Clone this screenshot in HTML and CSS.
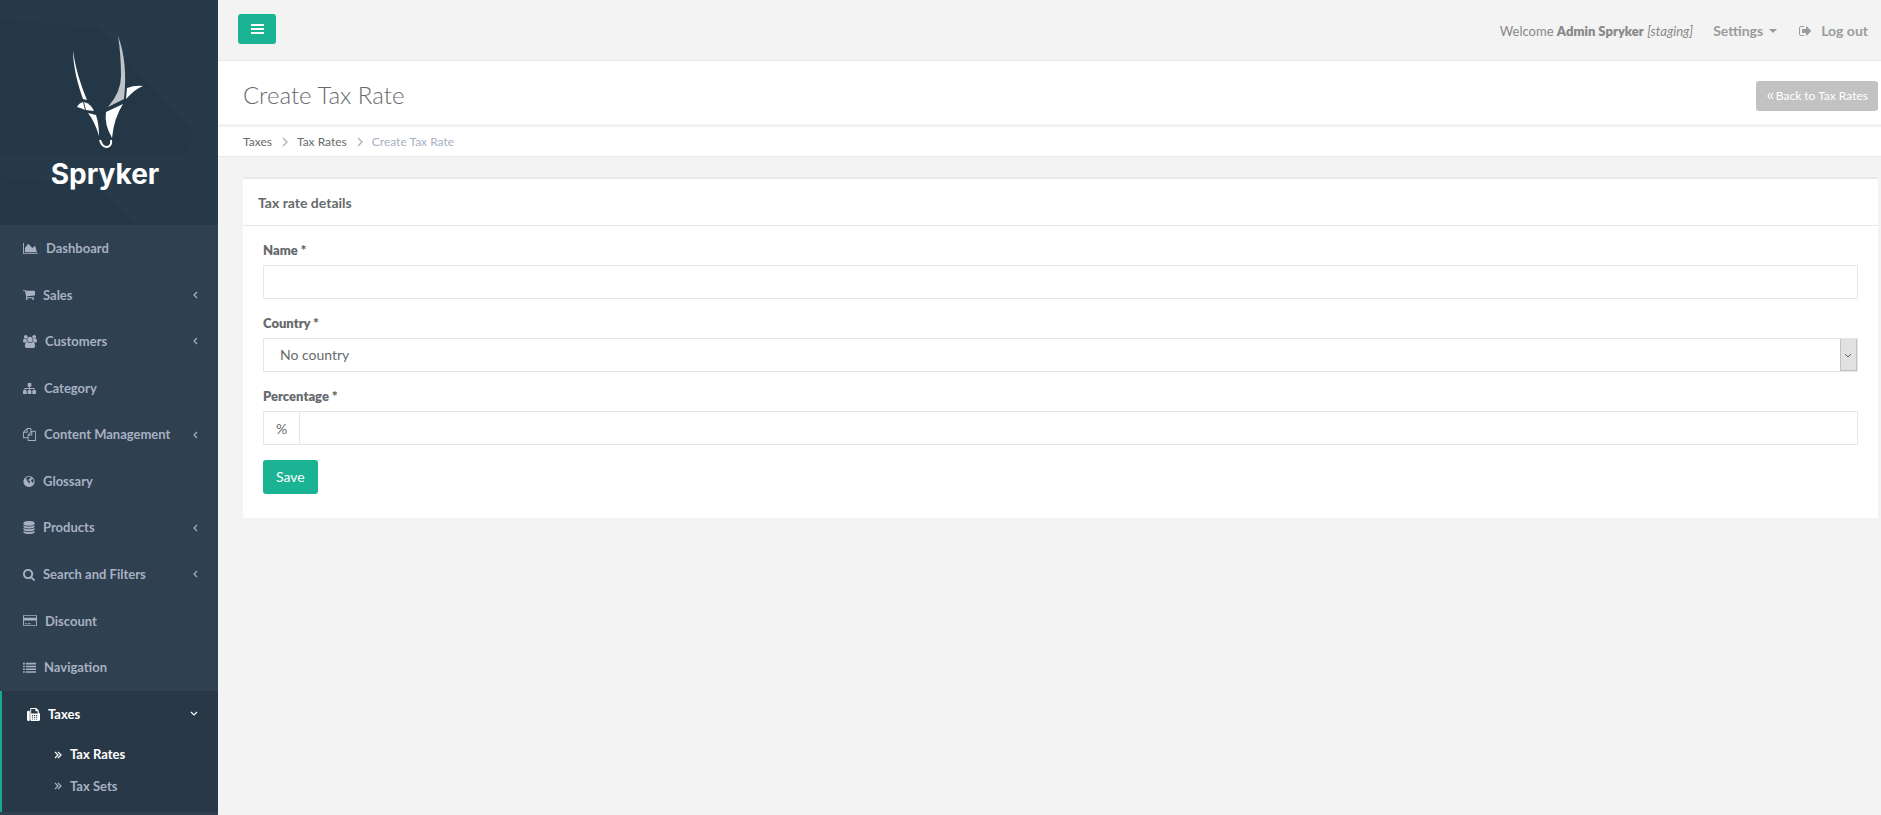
FILE: index.html
```html
<!DOCTYPE html>
<html lang="en">
<head>
    <meta charset="UTF-8">
    <meta name="viewport" content="width=device-width, initial-scale=1.0">
    <title>Create Tax Rate</title>
    <link rel="stylesheet" href="styles.css">
</head>

<body>
    <nav class="sidebar">
        <a class="brand" href="#">
            <!-- faceted backdrop -->
            <svg class="brand-bg" viewBox="0 0 218 225" preserveAspectRatio="none" aria-hidden="true">
                <rect width="218" height="225" fill="#243747"/>
                <path d="M0 0h118L98 28 0 19z" fill="#273a4a"/>
                <path d="M118 0h100v112l-23 22L98 28z" fill="#273a4a"/>
                <path d="M0 41l23 95-23 20z" fill="#253848"/>
                <path d="M195 134l23-22v44h-34z" fill="#273a4a"/>
                <path d="M0 156h218v69h-84l-36-40L0 177z" fill="#273a4a"/>
                <path d="M0 205l80 -2 -10 22H0z" fill="#253848"/>
            </svg>
            <svg class="brand-mark" width="72" height="114" viewBox="72 34 72 114" aria-hidden="true">
                <g fill="#fff">
                    <path d="M72 49C74 67 80 84 86 99L82 98C77 84 72 66 72 49z"/>
                    <path d="M76 106Q78 102 82 101L84 109Q80 107 76 106z"/>
                    <path d="M83 101Q90 103 93 110L85 109z"/>
                    <path d="M87 112L95 114Q98 123 98 135Q94 121 87 112z"/>
                    <path d="M105 111L122 103Q113 117 111 137Q103 123 105 111z"/>
                    <path d="M126 87Q134 84 142 85Q134 88 125 98z"/>
                </g>
                <path d="M117 35Q127 61 123 98L107 106Q120 91 120 75Q120 54 117 35z" fill="#bdc3c8"/>
                <path d="M99 139Q101 146 106 146Q111 145 110 139" fill="none" stroke="#fff" stroke-width="2"/>
            </svg>
            <span class="brand-name">Spryker</span>
        </a>

        <ul class="menu">
            <li><a href="#">
                <svg class="icon" width="15" height="13" viewBox="0 0 2048 1792"><path d="M2048 1536v128h-2048v-1536h128v1408h1920zm-384-1024l256 896h-1664v-576l448-576 576 576z"/></svg>
                Dashboard</a></li>
            <li><a href="#">
                <svg class="icon" width="12" height="13" viewBox="64 0 1664 1792"><path d="M704 1536q0 52-38 90t-90 38-90-38-38-90 38-90 90-38 90 38 38 90zm896 0q0 52-38 90t-90 38-90-38-38-90 38-90 90-38 90 38 38 90zm128-1088v512q0 24-16.500 42.500t-40.500 21.500l-1044 122q13 60 13 70 0 16-24 64h920q26 0 45 19t19 45-19 45-45 19h-1024q-26 0-45-19t-19-45q0-11 8-31.500t16-36 21.500-40 15.500-29.500l-177-823h-204q-26 0-45-19t-19-45 19-45 45-19h256q16 0 28.500 6.500t19.500 15.500 13 24.500 8 26 5.500 29.500 4.500 26h1201q26 0 45 19t19 45z"/></svg>
                Sales
                <svg class="arrow" width="5" height="8" viewBox="0 0 5 8"><path d="M4 1L1 4L4 7"/></svg></a></li>
            <li><a href="#">
                <svg class="icon" width="14" height="13" viewBox="64 0 1920 1792"><path d="M657 896q-162 5-265 128h-134q-82 0-138-40.500t-56-118.500q0-353 124-353 6 0 43.500 21t97.500 42.500 119 21.500q67 0 133-23-5 37-5 66 0 159 81 290zm1071 637q0 120-73 189.500t-194 69.500h-874q-121 0-194-69.500t-73-189.500q0-53 3.500-103.500t14-109 26.500-108.500 43-97.500 62-81 85.500-53.500 111.500-20q10 0 43 21.500t73 48 107 48 135 21.500 135-21.500 107-48 73-48 43-21.500q61 0 111.500 20t85.500 53.500 62 81 43 97.500 26.500 108.500 14 109 3.500 103.500zm-1024-1277q0 106-75 181t-181 75-181-75-75-181 75-181 181-75 181 75 75 181zm704 384q0 159-112.500 271.500t-271.500 112.500-271.500-112.500-112.500-271.500 112.500-271.500 271.500-112.500 271.500 112.500 112.500 271.500zm576 225q0 78-56 118.500t-138 40.500h-134q-103-123-265-128 81-131 81-290 0-29-5-66 66 23 133 23 59 0 119-21.500t97.500-42.500 43.500-21q124 0 124 353zm-128-609q0 106-75 181t-181 75-181-75-75-181 75-181 181-75 181 75 75 181z"/></svg>
                Customers
                <svg class="arrow" width="5" height="8" viewBox="0 0 5 8"><path d="M4 1L1 4L4 7"/></svg></a></li>
            <li><a href="#">
                <svg class="icon" width="13" height="13" viewBox="0 0 1792 1792"><path d="M1792 1248v320q0 40-28 68t-68 28h-320q-40 0-68-28t-28-68v-320q0-40 28-68t68-28h96v-192h-512v192h96q40 0 68 28t28 68v320q0 40-28 68t-68 28h-320q-40 0-68-28t-28-68v-320q0-40 28-68t68-28h96v-192h-512v192h96q40 0 68 28t28 68v320q0 40-28 68t-68 28h-320q-40 0-68-28t-28-68v-320q0-40 28-68t68-28h96v-192q0-52 38-90t90-38h512v-192h-96q-40 0-68-28t-28-68v-320q0-40 28-68t68-28h320q40 0 68 28t28 68v320q0 40-28 68t-68 28h-96v192h512q52 0 90 38t38 90v192h96q40 0 68 28t28 68z"/></svg>
                Category</a></li>
            <li><a href="#">
                <svg class="icon" width="13" height="13" viewBox="0 0 1792 1792"><path d="M1696 384q40 0 68 28t28 68v1216q0 40-28 68t-68 28h-960q-40 0-68-28t-28-68v-288h-544q-40 0-68-28t-28-68v-672q0-40 20-88t48-76l408-408q28-28 76-48t88-20h416q40 0 68 28t28 68v328q68-40 128-40h416zm-544 213l-299 299h299v-299zm-640-384l-299 299h299v-299zm196 647l316-316v-416h-384v416q0 40-28 68t-68 28h-416v640h512v-256q0-40 20-88t48-76zm956 804v-1152h-384v416q0 40-28 68t-68 28h-416v640h896z"/></svg>
                Content Management
                <svg class="arrow" width="5" height="8" viewBox="0 0 5 8"><path d="M4 1L1 4L4 7"/></svg></a></li>
            <li><a href="#">
                <svg class="icon" width="12" height="13" viewBox="128 0 1536 1792"><path fill-rule="evenodd" d="M896 128a768 768 0 1 0 1 0zM850 250l250 40 60 100-150 90-60 100-170 80 20 90 130 40 130 120-60 150-100 150-60-180-170-170-60-220-150-120 110-160zM1270 600l180-60 90 220-60 250-120 110-50-180-140-120z"/></svg>
                Glossary</a></li>
            <li><a href="#">
                <svg class="icon" width="12" height="13" viewBox="128 0 1536 1792"><path d="M896 768q237 0 443-43t325-127v170q0 69-103 128t-280 93.500-385 34.500-385-34.500-280-93.500-103-128v-170q119 84 325 127t443 43zm0 768q237 0 443-43t325-127v170q0 69-103 128t-280 93.500-385 34.500-385-34.500-280-93.500-103-128v-170q119 84 325 127t443 43zm0-384q237 0 443-43t325-127v170q0 69-103 128t-280 93.500-385 34.500-385-34.500-280-93.500-103-128v-170q119 84 325 127t443 43zm0-1152q208 0 385 34.500t280 93.500 103 128v128q0 69-103 128t-280 93.500-385 34.500-385-34.500-280-93.500-103-128v-128q0-69 103-128t280-93.500 385-34.500z"/></svg>
                Products
                <svg class="arrow" width="5" height="8" viewBox="0 0 5 8"><path d="M4 1L1 4L4 7"/></svg></a></li>
            <li><a href="#">
                <svg class="icon" width="12" height="13" viewBox="64 0 1664 1792"><path d="M1216 832q0-185-131.500-316.500t-316.500-131.500-316.500 131.500-131.500 316.500 131.500 316.500 316.500 131.500 316.500-131.500 131.500-316.500zm512 832q0 52-38 90t-90 38q-54 0-90-38l-343-342q-179 124-399 124-143 0-273.500-55.500t-225-150-150-225-55.500-273.500 55.500-273.500 150-225 225-150 273.500-55.500 273.500 55.500 225 150 150 225 55.500 273.500q0 220-124 399l343 343q37 37 37 90z"/></svg>
                Search and Filters
                <svg class="arrow" width="5" height="8" viewBox="0 0 5 8"><path d="M4 1L1 4L4 7"/></svg></a></li>
            <li><a href="#">
                <svg class="icon" width="14" height="13" viewBox="0 0 1920 1792"><path d="M1760 128q66 0 113 47t47 113v1216q0 66-47 113t-113 47h-1600q-66 0-113-47t-47-113v-1216q0-66 47-113t113-47h1600zm-1600 128q-13 0-22.500 9.500t-9.500 22.500v224h1664v-224q0-13-9.500-22.500t-22.500-9.500h-1600zm1600 1280q13 0 22.500-9.500t9.500-22.500v-608h-1664v608q0 13 9.500 22.500t22.500 9.500h1600zm-1504-128v-128h256v128h-256zm384 0v-128h384v128h-384z"/></svg>
                Discount</a></li>
            <li><a href="#">
                <svg class="icon" width="13" height="13" viewBox="0 0 1792 1792"><path d="M0 256h256v224H0zM384 256h1408v224H384zM0 640h256v224H0zM384 640h1408v224H384zM0 1024h256v224H0zM384 1024h1408v224H384zM0 1408h256v224H0zM384 1408h1408v224H384z"/></svg>
                Navigation</a></li>
            <li class="active"><a href="#">
                <svg class="icon" width="13" height="13" viewBox="0 0 1792 1792"><path fill-rule="evenodd" d="M160 384h160q64 0 64 96v1200q0 112-96 112h-128q-160 0-160-160v-1088q0-160 160-160zM544 0h672q88 0 140 52l208 208q52 52 52 140v220q176 60 176 240v772q0 160-160 160h-1024q-160 0-160-160v-1536q0-96 96-96zM576 128v640h896v-320h-224q-96 0-96-96v-224zM672 960v128h160v-128zM960 960v128h160v-128zM1248 960v128h160v-128zM672 1216v128h160v-128zM960 1216v128h160v-128zM1248 1216v128h160v-128zM672 1472v128h160v-128zM960 1472v128h160v-128zM1248 1472v128h160v-128z"/></svg>
                Taxes
                <svg class="arrow" width="8" height="6" viewBox="0 0 8 6"><path d="M1 1L4 4L7 1"/></svg></a>
                <ul class="submenu">
                    <li class="current"><a href="#"><svg class="chevrons" width="8" height="8" viewBox="0 0 8 8"><path d="M1 1L4 4L1 7M4 1L7 4L4 7"/></svg>Tax Rates</a></li>
                    <li><a href="#"><svg class="chevrons" width="8" height="8" viewBox="0 0 8 8"><path d="M1 1L4 4L1 7M4 1L7 4L4 7"/></svg>Tax Sets</a></li>
                </ul>
            </li>
        </ul>
    </nav>

    <div class="page">
        <header class="topbar">
            <button class="btn toggle" type="button" aria-label="Toggle menu">
                <svg width="13" height="10" viewBox="0 0 13 10"><path d="M0 0h13v2H0zM0 4h13v2H0zM0 8h13v2H0z"/></svg>
            </button>
            <span class="welcome">Welcome <strong>Admin Spryker</strong> <em>[staging]</em></span>
            <a class="settings" href="#">Settings <span class="caret"></span></a>
            <a class="logout" href="#"><svg width="13" height="14" viewBox="64 0 1664 1792"><path d="M704 1440q0 4 1 20t.5 26.500-3 23.500-10 19.500-20.500 6.500h-320q-119 0-203.500-84.500t-84.500-203.500v-704q0-119 84.500-203.500t203.500-84.500h320q13 0 22.500 9.500t9.500 22.500q0 4 1 20t.5 26.500-3 23.500-10 19.500-20.500 6.500h-320q-66 0-113 47t-47 113v704q0 66 47 113t113 47h312l11.500 1 11.500 3 8 5.500 7 9 2 13.500zm928-544q0 26-19 45l-544 544q-19 19-45 19t-45-19-19-45v-288h-448q-26 0-45-19t-19-45v-384q0-26 19-45t45-19h448v-288q0-26 19-45t45-19 45 19l544 544q19 19 19 45z"/></svg>Log out</a>
        </header>

        <div class="heading">
            <h1>Create Tax Rate</h1>
            <a class="btn back" href="#"><svg width="7" height="8" viewBox="0 0 7 8"><path d="M3 1L1 4L3 7M6 1L4 4L6 7"/></svg>Back to Tax Rates</a>
        </div>

        <ol class="breadcrumb">
            <li><a href="#">Taxes</a></li>
            <li><svg width="6" height="10" viewBox="0 0 6 10"><path d="M1 1L5 5L1 9"/></svg><a href="#">Tax Rates</a></li>
            <li><svg width="6" height="10" viewBox="0 0 6 10"><path d="M1 1L5 5L1 9"/></svg><span>Create Tax Rate</span></li>
        </ol>

        <main class="card">
            <h2>Tax rate details</h2>
            <form>
                <label for="name">Name *</label>
                <input class="field" id="name" type="text">

                <label for="country">Country *</label>
                <div class="select">
                    <select class="field" id="country">
                        <option>No country</option>
                    </select>
                    <svg width="17" height="32" viewBox="0 0 17 32" aria-hidden="true">
                        <path d="M0 0h17v32H0z" fill="#c3c3c3"/>
                        <path d="M1 0h15v31H1z" fill="#e1e1e1"/>
                        <path d="M5 15L8 18L11 15" fill="none" stroke="#606060"/>
                    </svg>
                </div>

                <label for="percentage">Percentage *</label>
                <div class="input-group">
                    <span class="addon">%</span>
                    <input class="field" id="percentage" type="text">
                </div>

                <button class="btn save" type="submit">Save</button>
            </form>
        </main>
    </div>
</body>
</html>
```
FILE: styles.css
```css
* { margin: 0; padding: 0; box-sizing: border-box }
body { display: flex; min-height: 100vh; overflow-x: hidden;
    font-family: Lato, "Open Sans", sans-serif; font-size: 13px; line-height: 1.43;
    color: #676a6c; background: #2f4050 }
ul, ol { list-style: none }
a { color: inherit; text-decoration: none }
input, select, button { font: inherit; color: inherit }

/* Sidebar */
.sidebar { width: 218px; flex: none; height: 100vh; overflow: hidden; background: #2f4050 }
.brand { position: relative; display: flex; flex-direction: column; align-items: center;
    height: 225px; padding: 35px 8px 0 0; overflow: hidden }
.brand-bg { position: absolute; left: 0; top: 0; width: 100%; height: 100% }
.brand-mark { position: relative; flex: none; margin-left: 8px }
.brand-name { position: relative; font-family: Inter, sans-serif; font-size: 28px; line-height: 50px;
    font-weight: 700; color: #fff }

.menu a { display: flex; align-items: center; padding: 14px 20px 14px 23px; font-weight: 700; color: #a7b1c2 }
.menu .icon { margin-right: 8px; fill: currentColor }
.menu .arrow, .chevrons { fill: none; stroke: currentColor; stroke-width: 1.2 }
.menu .arrow { margin-left: auto }
.menu .active { background: #293846; border-left: 2px solid #19aa8d; padding-bottom: 10px }
.menu .active > a { padding-left: 25px; color: #fff }
.submenu { padding-top: 1px }
.submenu a { padding: 7px 10px 6px 52px }
.submenu .current a { color: #fff }
.chevrons { margin-right: 8px }

/* Page */
.page { flex: 1; min-width: 0; background: #f3f3f3 }
.btn { border: none; border-radius: 3px; color: #fff; cursor: pointer }
.topbar { display: flex; align-items: center; height: 61px; padding: 2px 13px 0 20px;
    border-bottom: 1px solid #e7eaec; font-size: 14px; color: #888888 }
.toggle { display: flex; align-items: center; justify-content: center; width: 38px; height: 30px;
    margin: 0 auto 4px 0; background: #1ab394 }
.toggle svg { fill: currentColor }
.welcome { margin-right: 20px; font-size: 13px }
.welcome strong { font-weight: 800 }
.settings, .logout { display: flex; align-items: center; font-weight: 700; color: #999c9e }
.settings { margin-right: 22px }
.logout svg { margin-right: 9px; fill: currentColor }
.caret { margin-left: 6px; border: 4px solid transparent; border-top-color: currentColor; border-bottom: 0 }

.heading { display: flex; align-items: center; justify-content: space-between; height: 63px;
    padding: 6px 3px 0 25px; background: #fff }
.heading h1 { font-size: 24px; line-height: 26px; font-weight: 300; margin-bottom: 2px }
.back { display: flex; align-items: center; height: 30px; padding: 1px 10px 0 11px; font-size: 12px; background: #c2c2c2 }
.back svg { margin-right: 2px; fill: none; stroke: currentColor; stroke-width: 1.2 }

.breadcrumb { display: flex; align-items: center; height: 33px; padding: 0 25px; font-size: 12px;
    border-top: 3px solid #f3f3f3; border-bottom: 1px solid #e7eaec; background: #fff }
.breadcrumb li { display: flex; align-items: center }
.breadcrumb svg { margin: 0 9px 0 10px; fill: none; stroke: #b0b3b5; stroke-width: 1.4 }
.breadcrumb span { color: #a7b1c2 }

/* Form */
.card { margin: 20px 3px 0 25px; border-top: 2px solid #e7eaec; background: #fff }
.card h2 { padding: 14px 15px 12px; font-size: 14px; line-height: 20px; font-weight: 700;
    border-bottom: 1px solid #e7eaec }
.card form { padding: 15px 20px 24px }
.card label { display: block; margin-bottom: 5px; line-height: 19px; font-weight: 800 }
.field { display: block; width: 100%; height: 34px; padding: 6px 12px; font-size: 14px;
    border: 1px solid #e5e6e7; border-radius: 1px; background: #fff; margin-bottom: 15px }
.select { position: relative }
select.field { appearance: none; padding-left: 16px }
.select svg { position: absolute; right: 1px; top: 1px; pointer-events: none }
.input-group { display: flex }
.addon { width: 37px; height: 34px; border: 1px solid #e5e6e7; border-right: none; font-size: 14px;
    line-height: 33px; text-align: center }
.save { display: block; height: 34px; padding: 0 13px; font-size: 14px; background: #1ab394 }
```
